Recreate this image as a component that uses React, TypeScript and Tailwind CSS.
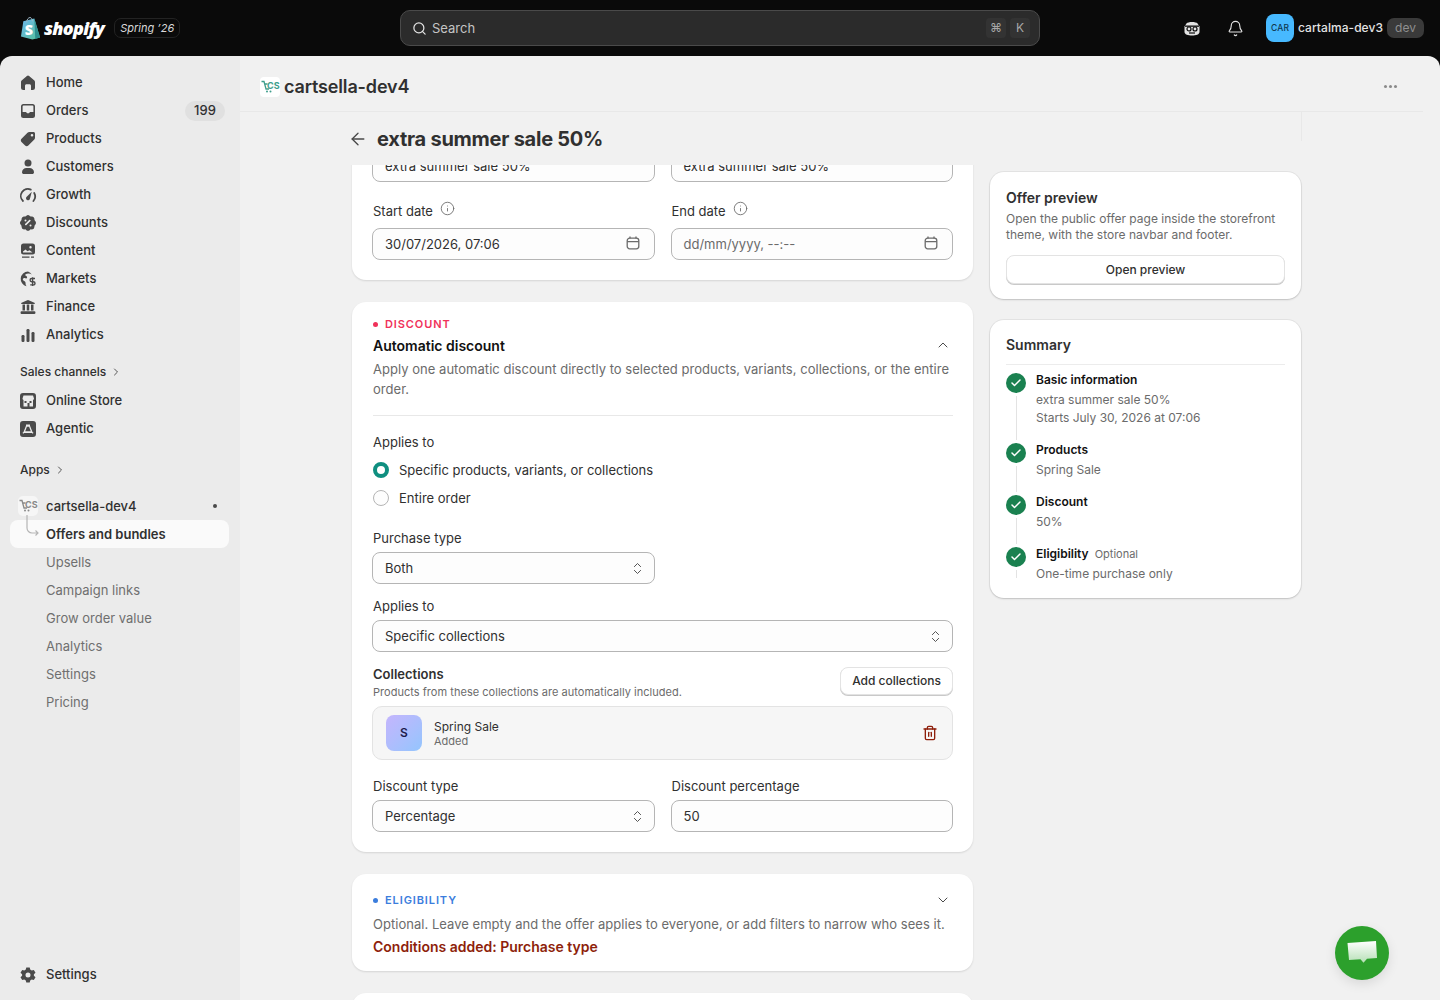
import { ArrowLeft, Bell, Check, ChevronDown, ChevronRight, ChevronUp, ChevronsUpDown, Info, Search, Trash2 } from "lucide-react"
import type { ReactNode } from "react"

const font = "font-['Inter',sans-serif]"

function Ico({ children }: { children: ReactNode }) {
  return (
    <svg viewBox="0 0 20 20" className="h-5 w-5 shrink-0 text-[#4a4a4a]" fill="currentColor">
      {children}
    </svg>
  )
}

const HomeIcon = () => (
  <Ico><path d="M8.900 3a1.700 1.700 0 0 1 2.200 0l5 4.300c.6.500.9 1.100.9 1.800v5.400a2.500 2.500 0 0 1-2.500 2.500H13v-4.200c0-.8-.7-1.500-1.500-1.500h-3c-.8 0-1.500.7-1.500 1.500V17H5.500A2.500 2.500 0 0 1 3 14.500V9.100c0-.7.3-1.300.9-1.800Z" /></Ico>
)
const OrdersIcon = () => (
  <Ico><path fillRule="evenodd" d="M5.500 3A2.500 2.500 0 0 0 3 5.500v9A2.500 2.500 0 0 0 5.500 17h9a2.500 2.500 0 0 0 2.500-2.500v-9A2.500 2.500 0 0 0 14.500 3ZM4.600 11V5.500c0-.5.4-.9.9-.9h9c.5 0 .9.4.9.9V11h-3c-.5 0-.9.3-1.100.7l-.3.6h-2l-.3-.6c-.2-.4-.6-.7-1.100-.7Z" /></Ico>
)
const TagIcon = () => (
  <Ico><path fillRule="evenodd" d="M11.300 3H15.500C16.300 3 17 3.700 17 4.500V8.700c0 .7-.3 1.300-.7 1.800l-6 6c-.9.9-2.300.9-3.200 0l-3.600-3.600c-.9-.9-.9-2.300 0-3.200l6-6c.5-.4 1.100-.7 1.800-.7ZM14 7.500a1.300 1.300 0 1 0 0-2.600 1.300 1.300 0 0 0 0 2.600Z" /></Ico>
)
const PersonIcon = () => (
  <Ico><circle cx="10" cy="6" r="3.500" /><path d="M4 15.200C4 12.700 6 11 8.500 11h3c2.500 0 4.500 1.700 4.500 4.200 0 1.100-.8 1.800-1.800 1.800H5.800C4.800 17 4 16.300 4 15.200Z" /></Ico>
)
const GrowthIcon = () => (
  <Ico>
    <path d="M5 16a7 7 0 0 1 7.800-11.400" fill="none" stroke="currentColor" strokeWidth="1.800" strokeLinecap="round" />
    <path d="M16.200 8a7 7 0 0 1-.8 8" fill="none" stroke="currentColor" strokeWidth="1.800" strokeLinecap="round" />
    <path d="M13.800 6.800 12 13.500a2 2 0 1 1-3.300-1.700Z" />
  </Ico>
)
const DiscountIcon = () => (
  <Ico>
    <path fillRule="evenodd" d="M8.400 2.700a2.300 2.300 0 0 1 3.200 0l1 .8 1.400-.1c1.200 0 2.300 1 2.400 2.300l.1 1.400.9 1.200c.8 1 .8 2.400 0 3.300l-.9 1.100-.1 1.400a2.400 2.400 0 0 1-2.400 2.300l-1.400-.1-1 .9c-1 .7-2.300.7-3.200 0l-1-.9-1.400.1a2.400 2.400 0 0 1-2.400-2.300l-.1-1.400-.9-1.100c-.8-.9-.8-2.300 0-3.300l.9-1.200.1-1.400c.1-1.300 1.200-2.300 2.400-2.300l1.400.1Zm-.9 5.800a1 1 0 1 0 0-2 1 1 0 0 0 0 2Zm5-.6a.8.800 0 0 0-1.100-1.100l-4.300 4.300a.8.800 0 0 0 1.100 1.100Zm0 5.600a1 1 0 1 0 0-2 1 1 0 0 0 0 2Z" />
  </Ico>
)
const ContentIcon = () => (
  <Ico>
    <path fillRule="evenodd" d="M5.500 2.500h9A2.500 2.500 0 0 1 17 5v6a2.500 2.500 0 0 1-2.500 2.500h-9A2.500 2.500 0 0 1 3 11V5a2.500 2.500 0 0 1 2.500-2.500Zm7 2.500a1.200 1.200 0 1 0 0 2.400 1.200 1.200 0 0 0 0-2.400ZM5 10.500l2.500-2 2 1.800 2-1 3 2.200H5Z" />
    <path d="M4 15.500h7.500v1.300H4ZM13 15.500h3v1.300h-3Z" />
  </Ico>
)
const MarketsIcon = () => (
  <Ico>
    <path d="M10 2.500a7.500 7.500 0 0 0-1.500 14.800 6 6 0 0 1-1-3.600c0-.9-.6-1.300-1.400-1.700-1-.5-1.600-1.400-1.100-2.300.5-.8 1.500-.7 2.300-.4.900.3 1.700.1 1.800-.8.100-.8-.5-1.300-1.300-1.700-.6-.4-.7-1-.2-1.500.6-.6 1.600-.9 2.900-.9 1.200 0 2.400.4 3.300 1.100a7.400 7.400 0 0 0-3.800-3Z" />
    <path d="M17 9.500h-3.300a1.600 1.600 0 0 0 0 3.200h1.700a1.600 1.600 0 0 1 0 3.200h-3.200M14.600 8.300v8.800" fill="none" stroke="currentColor" strokeWidth="1.400" />
  </Ico>
)
const FinanceIcon = () => (
  <Ico>
    <path d="M9.300 3.200a2 2 0 0 1 1.400 0l5.700 2.500c.7.300.5 1.300-.3 1.300H3.900c-.8 0-1-1-.3-1.300Z" />
    <path d="M4.500 7.500h2.500v6H4.500ZM8.750 7.500h2.500v6h-2.500ZM13 7.500h2.500v6H13ZM3.500 14.200h13c.5 0 .9.4.9.9v1c0 .5-.4.900-.9.900h-13a.9.900 0 0 1-.9-.9v-1c0-.5.4-.9.900-.9Z" />
  </Ico>
)
const AnalyticsIcon = () => (
  <Ico><rect x="3.500" y="10" width="3" height="7" rx="1.200" /><rect x="8.500" y="4" width="3" height="13" rx="1.200" /><rect x="13.500" y="7" width="3" height="10" rx="1.200" /></Ico>
)
const StoreIcon = () => (
  <Ico>
    <path fillRule="evenodd" d="M5 2h10a3 3 0 0 1 3 3v10a3 3 0 0 1-3 3H5a3 3 0 0 1-3-3V5a3 3 0 0 1 3-3Zm.500 2.500-1 3a1.800 1.800 0 0 0 1 1.500v6.500h4v-3.500h2v3.500h3.500V9a1.800 1.800 0 0 0 1-1.500l-1-3Zm1 5.500h2v2h-2Zm5 0h2v2h-2Z" />
  </Ico>
)
const AgenticIcon = () => (
  <Ico>
    <path fillRule="evenodd" d="M5 2h10a3 3 0 0 1 3 3v10a3 3 0 0 1-3 3H5a3 3 0 0 1-3-3V5a3 3 0 0 1 3-3Zm3 3.500v1.200L5.500 13l-1 .7.700 1 1-.6h7.600l1 .6.700-1-1-.7L12 6.700V5.500Zm.9 2.300h2.200l1.700 4.500H7.200Z" />
  </Ico>
)
const GearIcon = () => (
  <Ico>
    <path fillRule="evenodd" d="M8.300 2.500h3.400l.5 2.100 1.500.9 2.100-.6 1.700 2.900-1.600 1.500v1.400l1.600 1.500-1.700 2.900-2.100-.6-1.500.9-.5 2.100H8.300l-.5-2.100-1.500-.9-2.100.6-1.700-2.900 1.600-1.500V9.300L2.500 7.800l1.700-2.900 2.100.6 1.500-.9ZM10 12.500a2.500 2.500 0 1 0 0-5 2.500 2.500 0 0 0 0 5Z" />
  </Ico>
)

function NavRow({ icon, label, badge }: { icon: ReactNode; label: string; badge?: string }) {
  return (
    <div className="flex h-7 items-center gap-2 pl-2 pr-1 text-[13px] font-medium text-[#303030]">
      {icon}
      <span className="flex-1">{label}</span>
      {badge && <span className="flex h-5 w-10 items-center justify-center rounded-full bg-[#e0e0e0] text-[13px] font-medium">{badge}</span>}
    </div>
  )
}

function SectionLabel({ label }: { label: string }) {
  return (
    <div className="flex h-7 items-center gap-1 pl-2.5 text-[12px] font-medium text-[#303030]">
      {label}
      <ChevronRight className="h-3 w-3 text-[#555]" strokeWidth={2} />
    </div>
  )
}

function CsLogo({ grey }: { grey?: boolean }) {
  const c = grey ? "#8a8a8a" : "#3f9e8c"
  return (
    <span className={grey ? "flex h-5 w-5 shrink-0 items-center justify-center rounded-[5px] bg-[#f6f6f6]" : "flex h-5 w-5 shrink-0 items-center justify-center rounded-[4px] bg-white"}>
      <svg viewBox="0 0 20 20" className="h-5 w-5">
        <path d="M1.500 4.500H4l2 7.500h3M4.500 7H7.500" fill="none" stroke={c} strokeWidth="1.300" />
        <circle cx="7" cy="14.500" r="1" fill={c} />
        <circle cx="10.500" cy="14.500" r="1" fill={c} />
        <text x="7" y="11.500" fontSize="9" fontWeight="700" fontFamily="Inter, sans-serif" fill={c}>CS</text>
      </svg>
    </span>
  )
}

function Sidebar() {
  const main: [ReactNode, string, string?][] = [
    [<HomeIcon />, "Home"],
    [<OrdersIcon />, "Orders", "199"],
    [<TagIcon />, "Products"],
    [<PersonIcon />, "Customers"],
    [<GrowthIcon />, "Growth"],
    [<DiscountIcon />, "Discounts"],
    [<ContentIcon />, "Content"],
    [<MarketsIcon />, "Markets"],
    [<FinanceIcon />, "Finance"],
    [<AnalyticsIcon />, "Analytics"],
  ]
  return (
    <aside className="flex w-[240px] shrink-0 flex-col bg-[#ebebeb] pb-[11px] pl-2.5 pr-[11px] pt-[13px]">
      {main.map(([icon, label, badge]) => (
        <NavRow key={label} icon={icon} label={label} badge={badge} />
      ))}
      <div className="mt-[9px]">
        <div className="mb-[1px]"><SectionLabel label="Sales channels" /></div>
        <NavRow icon={<StoreIcon />} label="Online Store" />
        <NavRow icon={<AgenticIcon />} label="Agentic" />
      </div>
      <div className="mt-[13px]"><SectionLabel label="Apps" /></div>
      <div className="relative mt-[8px]">
        <div className="flex h-7 items-center gap-2 pl-2 pr-3 text-[13px] font-medium text-[#303030]">
          <CsLogo grey />
          <span className="flex-1 pt-[2px]">cartsella-dev4</span>
          <span className="h-1 w-1 rounded-full bg-[#4a4a4a]" />
        </div>
        <div className="flex h-7 items-center rounded-[8px] bg-[#fafafa] pl-9 pt-[2px] text-[13px] font-semibold text-[#303030]">Offers and bundles</div>
        <svg className="absolute left-[16px] top-[21px] h-6 w-6" viewBox="0 0 24 24" fill="none" stroke="#b5b5b5" strokeWidth="1.200">
          <path d="M1 2v13a5 5 0 0 0 5 5h6M9.500 17.500l2.500 2.500-2.500 2.500" />
        </svg>
        {["Upsells", "Campaign links", "Grow order value", "Analytics", "Settings", "Pricing"].map((label) => (
          <div key={label} className="flex h-7 items-center pl-9 pt-[2px] text-[13px] text-[#6f6f6f]">{label}</div>
        ))}
      </div>
      <div className="mt-auto"><NavRow icon={<GearIcon />} label="Settings" /></div>
    </aside>
  )
}

function TopBar() {
  return (
    <header className="relative flex h-14 shrink-0 items-center bg-[#0a0a0a]">
      <div className="flex w-[400px] items-center pl-5">
        <svg viewBox="0 0 22 24" className="h-6 w-[21px]">
          <defs>
            <linearGradient id="bag" x1="0" y1="0" x2="1" y2="1">
              <stop offset="0" stopColor="#6cb6ee" />
              <stop offset="1" stopColor="#56c29a" />
            </linearGradient>
          </defs>
          <path d="M1 21 3.500 5 15 2l6 20-8 2Z" fill="url(#bag)" />
          <path d="M15 2l6 20-5 1.500Z" fill="#2f8f8f" />
          <path d="M7 6c0-3 2-5 3.500-5S13 3 13 5" fill="none" stroke="#9fb8c8" strokeWidth="1" />
          <text x="5" y="19" fontSize="15" fontWeight="800" fill="#fff" fontFamily="Open Sans, sans-serif">S</text>
        </svg>
        <span className="ml-[3px] font-['Open_Sans',sans-serif] text-[18px] font-extrabold italic leading-none tracking-[-0.7px] text-white">shopify</span>
        <span className="ml-[10px] flex h-5 w-[66px] items-center justify-center rounded-[7px] border border-[#232323] text-[11px] italic text-[#d8d8d8]">Spring ’26</span>
      </div>
      <div className="flex h-9 w-[640px] items-center rounded-[10px] border border-[#4a4a4a] bg-[#2b2b2b] pl-[11px] pr-[9px]">
        <Search className="h-[15px] w-[15px] text-[#e3e3e3]" strokeWidth={2} />
        <span className="ml-[5px] flex-1 pt-px text-[13px] text-[#c4c4c4]">Search</span>
        <span className="flex h-5 w-5 items-center justify-center rounded-[4px] bg-[#333] text-[12px] text-[#a8a8a8]">⌘</span>
        <span className="ml-1 flex h-5 w-5 items-center justify-center rounded-[4px] bg-[#333] text-[12px] text-[#a8a8a8]">K</span>
      </div>
      <div className="ml-[143px] flex items-center">
        <svg viewBox="0 0 18 18" className="h-[18px] w-[18px]">
          <path d="M3.500 4.500C5 2.500 13 2.500 14.500 4.500L16.500 7.500V13C16.500 15.500 13 16.500 9 16.500S1.500 15.500 1.500 13V7.500Z" fill="#e3e3e3" />
          <rect x="2" y="6.500" width="14" height="1.300" fill="#0a0a0a" />
          <circle cx="6" cy="10" r="2" fill="#e3e3e3" stroke="#0a0a0a" strokeWidth="1.200" />
          <circle cx="12" cy="10" r="2" fill="#e3e3e3" stroke="#0a0a0a" strokeWidth="1.200" />
          <path d="M6 14h6" stroke="#0a0a0a" strokeWidth="1.200" />
        </svg>
        <Bell className="ml-[26px] h-[17px] w-[17px] text-[#e3e3e3]" strokeWidth={1.600} />
        <span className="ml-[22px] flex h-7 w-7 items-center justify-center rounded-[8px] bg-[#47b9ff] text-[8.500px] font-medium tracking-[0.2px] text-[#10374f]">CAR</span>
        <span className="ml-1 text-[12px] font-medium tracking-[0.05px] text-[#e3e3e3]">cartalma-dev3</span>
        <span className="ml-1 flex h-5 w-[37px] items-center justify-center rounded-[7px] bg-[#3a3a3a] text-[12px] text-[#8f8f8f]">dev</span>
      </div>
    </header>
  )
}

function Field({ label, value, placeholder, right, info }: { label?: string; value?: string; placeholder?: string; right?: ReactNode; info?: boolean }) {
  return (
    <div className="min-w-0 flex-1">
      {label && (
        <div className={(info ? "mb-[7px] " : "mb-1 ") + "flex h-5 items-center gap-[7px] pl-px pt-px text-[13px] text-[#303030]"}>
          {label}
          {info && <Info className="-mt-[6px] h-[15px] w-[15px] text-[#6b6b6b]" strokeWidth={1.400} />}
        </div>
      )}
      <div className="flex h-8 items-center justify-between rounded-[8px] border border-[#b5b5b5] bg-[#fdfdfd] pl-3 pr-[14px] pt-px text-[13px] text-[#303030]">
        {value ? <span>{value}</span> : <span className="text-[#6b6b6b]">{placeholder}</span>}
        {right}
      </div>
    </div>
  )
}

const Cal = () => (
  <svg viewBox="0 0 14 14" className="mb-1 h-[14px] w-[14px]" fill="none" stroke="#6b6b6b" strokeWidth="1.300">
    <rect x="1.200" y="2.200" width="11.600" height="10.600" rx="2.500" />
    <path d="M1.200 5.600h11.600M4 .5v2M10 .5v2" />
  </svg>
)
const Updown = () => <ChevronsUpDown className="-mr-[5px] h-[15px] w-[15px] text-[#4a4a4a]" strokeWidth={1.500} />

function Card({ children, className }: { children?: ReactNode; className: string }) {
  return <section className={"rounded-[14px] bg-white " + className}>{children}</section>
}

const leftShadow = "shadow-[0_1px_2px_rgba(0,0,0,0.12)] "
const rightShadow = "shadow-[0_0_0_1px_rgba(0,0,0,0.05),0_1px_2px_rgba(0,0,0,0.16)] "

function Eyebrow({ color, dot, label }: { color: string; dot: string; label: string }) {
  return (
    <div className={"flex h-4 items-center gap-[7px] pl-px text-[11px] font-semibold tracking-[0.9px] " + color}>
      <span className={"h-[5px] w-[5px] rounded-full " + dot} />
      {label}
    </div>
  )
}

function BasicCard() {
  return (
    <Card className={leftShadow + "-mt-[35px] px-5 pb-5 pt-5"}>
      <div className="flex gap-4">
        <Field value="extra summer sale 50%" />
        <Field value="extra summer sale 50%" />
      </div>
      <div className="mt-[19px] flex gap-4">
        <Field label="Start date" info value="30/07/2026, 07:06" right={<Cal />} />
        <Field label="End date" info placeholder="dd/mm/yyyy, --:--" right={<Cal />} />
      </div>
    </Card>
  )
}

function DiscountCard() {
  return (
    <Card className={leftShadow + "px-5 pb-5 pt-[14px]"}>
      <Eyebrow color="text-[#f0325a]" dot="bg-[#f0325a]" label="DISCOUNT" />
      <div className="mt-[1px] flex h-6 items-center justify-between pl-px">
        <h2 className="text-[14px] font-semibold text-[#111]">Automatic discount</h2>
        <ChevronUp className="mr-[2px] h-4 w-4 text-[#4a4a4a]" strokeWidth={1.500} />
      </div>
      <p className="mt-[2px] pl-px text-[13px] leading-[20px] tracking-[0.03px] text-[#6b6b6b]">
        Apply one automatic discount directly to selected products, variants, collections, or the entire order.
      </p>
      <div className="mb-4 ml-px mt-4 h-px bg-[#e8e8e8]" />
      <div className="flex h-5 items-center pl-px pt-px text-[13px] text-[#303030]">Applies to</div>
      <div className="mt-1 flex h-7 items-center gap-[10px] pl-px text-[13px] text-[#303030]">
        <span className="h-4 w-4 rounded-full border-[4.500px] border-[#0f8f80] bg-white" />
        <span className="pt-px">Specific products, variants, or collections</span>
      </div>
      <div className="flex h-7 items-center gap-[10px] pl-px text-[13px] text-[#303030]">
        <span className="h-4 w-4 rounded-full border border-[#b5b5b5] bg-[#fdfdfd]" />
        <span className="pt-px">Entire order</span>
      </div>
      <div className="mt-4 w-[282.500px]">
        <Field label="Purchase type" value="Both" right={<Updown />} />
      </div>
      <div className="mt-3">
        <Field label="Applies to" value="Specific collections" right={<Updown />} />
      </div>
      <div className="mt-[14px] flex items-start justify-between pl-px">
        <div>
          <div className="text-[13px] font-semibold leading-[16px] text-[#303030]">Collections</div>
          <div className="mt-[2px] text-[11px] leading-[16px] tracking-[0.03px] text-[#6b6b6b]">Products from these collections are automatically included.</div>
        </div>
        <button className="mt-[1px] flex h-7 w-[113px] items-center justify-center rounded-[8px] border border-[#e3e3e3] bg-white text-[12px] font-medium text-[#303030] shadow-[0_1px_0_#c9c9c9]">Add collections</button>
      </div>
      <div className="mt-[6px] flex h-[54px] items-center rounded-[10px] border border-[#e3e3e3] bg-[#f6f6f6] pl-[13px] pr-[14px]">
        <span className="flex h-9 w-9 items-center justify-center rounded-[8px] bg-gradient-to-br from-[#c4b5fd] to-[#93c5fd] text-[12px] font-semibold text-[#1e1b4b]">S</span>
        <div className="ml-3 flex-1 pt-[2px]">
          <div className="text-[12px] leading-[14px] text-[#303030]">Spring Sale</div>
          <div className="text-[11px] leading-[14px] text-[#6b6b6b]">Added</div>
        </div>
        <Trash2 className="h-4 w-4 text-[#8e1f0b]" strokeWidth={2} />
      </div>
      <div className="mt-4 flex gap-4">
        <Field label="Discount type" value="Percentage" right={<Updown />} />
        <Field label="Discount percentage" value="50" />
      </div>
    </Card>
  )
}

function EligibilityCard() {
  return (
    <Card className={leftShadow + "h-[97px] shrink-0 px-5 pt-[18px]"}>
      <div className="flex items-center justify-between">
        <Eyebrow color="text-[#3b7ddd]" dot="bg-[#3b7ddd]" label="ELIGIBILITY" />
        <ChevronDown className="mr-[2px] h-4 w-4 text-[#4a4a4a]" strokeWidth={1.500} />
      </div>
      <p className="mt-[6px] pl-px text-[13px] leading-[20px] tracking-[0.03px] text-[#6b6b6b]">Optional. Leave empty and the offer applies to everyone, or add filters to narrow who sees it.</p>
      <p className="mt-[3px] pl-px text-[14px] font-semibold leading-[20px] text-[#8e1f0b]">Conditions added: Purchase type</p>
    </Card>
  )
}

function Step({ title, tag, lines, line, className }: { title: string; tag?: string; lines: string[]; line: string; className: string }) {
  return (
    <div className={"flex gap-[10px] " + className}>
      <div className="flex w-5 shrink-0 flex-col items-center">
        <span className="flex h-5 w-5 items-center justify-center rounded-full bg-[#1a8150]">
          <Check className="h-3 w-3 text-white" strokeWidth={3} />
        </span>
        <span className={"mt-[3px] w-px bg-[#e3e3e3] " + line} />
      </div>
      <div>
        <div className="flex h-[14px] items-center gap-[6px] text-[12px] font-semibold text-[#111]">
          {title}
          {tag && <span className="text-[11px] font-normal text-[#6b6b6b]">{tag}</span>}
        </div>
        {lines.map((l, i) => (
          <div key={l} className={(i === 0 ? "mt-[6px] " : "mt-1 ") + "h-[14px] text-[12px] leading-[14px] text-[#6b6b6b]"}>{l}</div>
        ))}
      </div>
    </div>
  )
}

function RightColumn() {
  return (
    <div className="mt-[7px] flex w-[311px] shrink-0 flex-col gap-[21px]">
      <Card className={rightShadow + "h-[127px] px-4 pt-4"}>
        <h3 className="text-[14px] font-semibold leading-[20px] text-[#303030]">Offer preview</h3>
        <p className="mt-[3px] text-[12px] leading-[16px] text-[#6b6b6b]">Open the public offer page inside the storefront theme, with the store navbar and footer.</p>
        <button className="mt-3 flex h-[29px] w-full items-center justify-center rounded-[8px] border border-[#e3e3e3] bg-white text-[12px] font-medium text-[#303030] shadow-[0_1px_0_#c9c9c9]">Open preview</button>
      </Card>
      <Card className={rightShadow + "h-[278px] px-4 pt-[15px]"}>
        <h3 className="text-[14px] font-semibold leading-[20px] text-[#303030]">Summary</h3>
        <div className="mb-2 mt-[9px] h-px bg-[#ececec]" />
        <Step className="h-[70px]" title="Basic information" lines={["extra summer sale 50%", "Starts July 30, 2026 at 07:06"]} line="h-[44px]" />
        <Step className="h-[52px]" title="Products" lines={["Spring Sale"]} line="h-[26px]" />
        <Step className="h-[52px]" title="Discount" lines={["50%"]} line="h-[26px]" />
        <Step className="h-[44px]" title="Eligibility" tag="Optional" lines={["One-time purchase only"]} line="h-2" />
      </Card>
    </div>
  )
}

export default function App() {
  return (
    <div className={font + " relative flex h-screen flex-col overflow-hidden bg-[#0a0a0a]"}>
      <TopBar />
      <div className="flex min-h-0 flex-1 overflow-hidden rounded-t-[12px]">
        <Sidebar />
        <main className="flex min-w-0 flex-1 flex-col bg-[#f1f1f1]">
          <div className="mr-[17px] flex h-14 shrink-0 items-center border-b border-[#e8e8e8] pl-5 pr-[26px] pt-[6px]">
            <CsLogo />
            <h1 className="ml-1 flex-1 text-[18px] font-semibold tracking-[-0.15px] text-[#303030]">cartsella-dev4</h1>
            <span className="flex gap-[2px]">
              <span className="h-[3px] w-[3px] rounded-full bg-[#8a8a8a]" />
              <span className="h-[3px] w-[3px] rounded-full bg-[#8a8a8a]" />
              <span className="h-[3px] w-[3px] rounded-full bg-[#8a8a8a]" />
            </span>
          </div>
          <div className="flex h-[53px] shrink-0 items-center pl-[108px]">
            <ArrowLeft className="h-5 w-5 text-[#4a4a4a]" strokeWidth={1.600} />
            <h2 className="ml-[9px] text-[20px] font-bold tracking-[-0.25px] text-[#303030]">extra summer sale 50%</h2>
            <span className="ml-auto mr-[138px] h-[29px] w-px self-start bg-[#e8e8e8]" />
          </div>
          <div className="flex min-h-0 flex-1 gap-[17px] overflow-hidden pl-[112px]">
            <div className="flex w-[621px] shrink-0 flex-col gap-[22px]">
              <BasicCard />
              <DiscountCard />
              <EligibilityCard />
              <Card className={leftShadow + "h-[80px] shrink-0"} />
            </div>
            <RightColumn />
          </div>
        </main>
      </div>
      <div className="absolute left-[1335px] top-[926px] flex h-[54px] w-[54px] items-center justify-center rounded-full bg-[#2ca02c] shadow-[0_4px_12px_rgba(0,0,0,0.1)]">
        <svg viewBox="0 0 32 28" className="h-7 w-8">
          <defs>
            <linearGradient id="bubble" x1="0" y1="0" x2="0" y2="1">
              <stop offset="0" stopColor="#ffffff" />
              <stop offset="1" stopColor="#b6dfb6" />
            </linearGradient>
          </defs>
          <path d="M1.500 4 30 2l1 17-10 .8-3.500 4-3-3.600L3 21Z" fill="url(#bubble)" />
        </svg>
      </div>
    </div>
  )
}
